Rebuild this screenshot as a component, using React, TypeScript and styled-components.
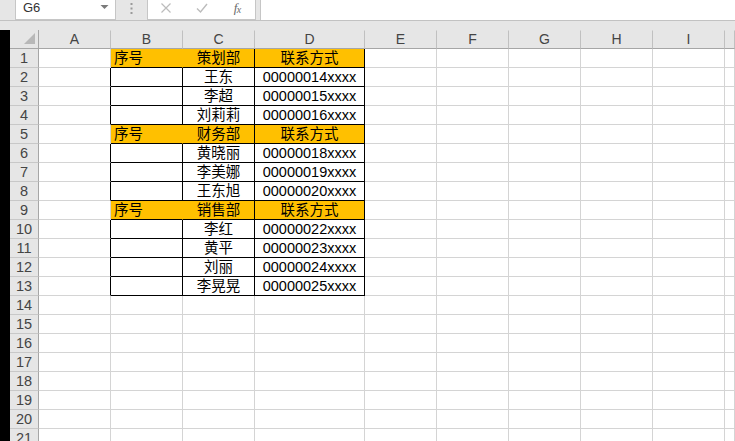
import React from "react";
import styled, { createGlobalStyle } from "styled-components";

const GlobalStyle = createGlobalStyle`
  html, body { margin: 0; padding: 0; background: #e6e6e6; }
  * { box-sizing: border-box; }
`;

const GRID = "#d4d4d4";
const BLACK = "#000000";
const HEAD_LINE = "#a6a6a6";
const ORANGE = "#ffc000";
const CELL_FONT = `"Liberation Sans", "Noto Sans CJK SC", sans-serif`;

const Page = styled.div`
  width: 735px;
  height: 441px;
  overflow: hidden;
  display: flex;
  flex-direction: column;
  background: #e6e6e6;
`;

const FormulaBar = styled.div`
  height: 21px;
  display: flex;
  padding-left: 15px;
  background: #e6e6e6;
  border-bottom: 1px solid #c2c2c2;
  flex-shrink: 0;
`;

const NameBox = styled.div`
  width: 101px;
  height: 20px;
  background: #ffffff;
  border: 1px solid #c6c6c6;
  border-top: none;
  display: flex;
  align-items: flex-start;
  justify-content: space-between;
  padding: 0 6px 0 7px;
  font-family: "Liberation Sans", sans-serif;
  font-size: 13px;
  line-height: 15px;
  color: #333333;
`;

const Grip = styled.div`
  width: 31px;
  display: flex;
  justify-content: center;
  padding-top: 3px;
`;

const FxBox = styled.div`
  width: 109px;
  height: 20px;
  background: #ffffff;
  border: 1px solid #c6c6c6;
  border-top: none;
  display: flex;
  align-items: flex-start;
  padding-top: 1px;
`;

const FxSlot = styled.div<{ $w: number }>`
  width: ${(p) => p.$w}px;
  display: flex;
  justify-content: center;
`;

const FxText = styled.span`
  font-family: "Liberation Serif", serif;
  font-style: italic;
  font-size: 13px;
  line-height: 13px;
  color: #6a6a6a;
  letter-spacing: -0.5px;
  & > sub {
    font-size: 10px;
    vertical-align: -1px;
  }
`;

const FormulaInput = styled.div`
  flex: 1;
  margin-left: 4px;
  height: 20px;
  background: #ffffff;
  border-left: 1px solid #c6c6c6;
`;

const Spacer = styled.div`
  height: 9px;
  flex-shrink: 0;
`;

const Workspace = styled.div`
  flex: 1;
  display: flex;
  min-height: 0;
`;

const LeftEdge = styled.div`
  width: 10px;
  background: #000000;
  flex-shrink: 0;
`;

const Sheet = styled.div`
  flex: 1;
  display: grid;
  grid-template-columns: 29px 72px 72px 72px 110px 72px 72px 72px 72px 72px 1fr;
  grid-auto-rows: 19px;
  background: #ffffff;
  overflow: hidden;
`;

const Corner = styled.div`
  background: #e6e6e6;
  border-right: 1px solid ${HEAD_LINE};
  border-bottom: 1px solid ${HEAD_LINE};
  display: flex;
  justify-content: flex-end;
  align-items: flex-end;
  padding: 0 3px 4px 0;
`;

const ColHeader = styled.div`
  background: #e6e6e6;
  border-right: 1px solid #c0c0c0;
  border-bottom: 1px solid ${HEAD_LINE};
  border-top: 1px solid #e6e6e6;
  font-family: "Liberation Sans", sans-serif;
  font-size: 14px;
  line-height: 17px;
  color: #444444;
  text-align: center;
`;

const RowHeader = styled.div`
  background: #e6e6e6;
  border-right: 1px solid ${HEAD_LINE};
  border-bottom: 1px solid #c8c8c8;
  font-family: "Liberation Sans", sans-serif;
  font-size: 14.5px;
  line-height: 19px;
  color: #444444;
  text-align: center;
`;

const Cell = styled.div<{
  $fill?: boolean;
  $align?: "left" | "center";
  $right?: string;
  $bottom?: string;
}>`
  background: ${(p) => (p.$fill ? ORANGE : "#ffffff")};
  border-right: 1px solid ${(p) => p.$right ?? GRID};
  border-bottom: 1px solid ${(p) => p.$bottom ?? GRID};
  font-family: ${CELL_FONT};
  font-size: 14.5px;
  line-height: 19px;
  color: #000000;
  text-align: ${(p) => p.$align ?? "left"};
  padding-left: ${(p) => (p.$align === "center" ? 0 : 3)}px;
  white-space: nowrap;
  overflow: hidden;
`;

type Row = { header?: boolean; b?: string; c?: string; d?: string };

const rows: Row[] = [
  { header: true, b: "序号", c: "策划部", d: "联系方式" },
  { c: "王东", d: "00000014xxxx" },
  { c: "李超", d: "00000015xxxx" },
  { c: "刘莉莉", d: "00000016xxxx" },
  { header: true, b: "序号", c: "财务部", d: "联系方式" },
  { c: "黄晓丽", d: "00000018xxxx" },
  { c: "李美娜", d: "00000019xxxx" },
  { c: "王东旭", d: "00000020xxxx" },
  { header: true, b: "序号", c: "销售部", d: "联系方式" },
  { c: "李红", d: "00000022xxxx" },
  { c: "黄平", d: "00000023xxxx" },
  { c: "刘丽", d: "00000024xxxx" },
  { c: "李晃晃", d: "00000025xxxx" },
];

const columns = ["A", "B", "C", "D", "E", "F", "G", "H", "I", ""];
const TOTAL_ROWS = 21;

function renderRow(i: number) {
  const r: Row | undefined = rows[i];
  const inTable = !!r;
  const header = !!r?.header;
  return (
    <React.Fragment key={i}>
      <RowHeader>{i + 1}</RowHeader>
      <Cell $right={inTable && !header ? BLACK : GRID} />
      <Cell
        $fill={header}
        $right={inTable ? (header ? ORANGE : BLACK) : GRID}
        $bottom={inTable ? BLACK : GRID}
      >
        {r?.b}
      </Cell>
      <Cell $fill={header} $align="center" $right={inTable ? BLACK : GRID} $bottom={inTable ? BLACK : GRID}>
        {r?.c}
      </Cell>
      <Cell $fill={header} $align="center" $right={inTable ? BLACK : GRID} $bottom={inTable ? BLACK : GRID}>
        {r?.d}
      </Cell>
      <Cell />
      <Cell />
      <Cell />
      <Cell />
      <Cell />
      <Cell />
    </React.Fragment>
  );
}

export default function App() {
  return (
    <Page>
      <GlobalStyle />
      <FormulaBar>
        <NameBox>
          <span>G6</span>
          <svg width="9" height="14" viewBox="0 0 9 14">
            <polygon points="0.5,5 8.5,5 4.5,9" fill="#7a7a7a" />
          </svg>
        </NameBox>
        <Grip>
          <svg width="3" height="12" viewBox="0 0 3 12">
            <rect x="0.5" y="0" width="2" height="2" fill="#9a9a9a" />
            <rect x="0.5" y="4.5" width="2" height="2" fill="#9a9a9a" />
            <rect x="0.5" y="9" width="2" height="2" fill="#9a9a9a" />
          </svg>
        </Grip>
        <FxBox>
          <FxSlot $w={36}>
            <svg width="14" height="14" viewBox="0 0 14 14">
              <path d="M2.5 2.5 L11.5 11.5 M11.5 2.5 L2.5 11.5" stroke="#bcbcbc" strokeWidth="1.2" fill="none" />
            </svg>
          </FxSlot>
          <FxSlot $w={36}>
            <svg width="14" height="14" viewBox="0 0 14 14">
              <path d="M2 7.5 L5.5 11 L12 3" stroke="#bcbcbc" strokeWidth="1.4" fill="none" />
            </svg>
          </FxSlot>
          <FxSlot $w={36}>
            <FxText>
              f<sub>x</sub>
            </FxText>
          </FxSlot>
        </FxBox>
        <FormulaInput />
      </FormulaBar>
      <Spacer />
      <Workspace>
        <LeftEdge />
        <Sheet>
          <Corner>
            <svg width="11" height="11" viewBox="0 0 11 11">
              <polygon points="11,0 11,11 0,11" fill="#b8b8b8" />
            </svg>
          </Corner>
          {columns.map((c, idx) => (
            <ColHeader key={idx}>{c}</ColHeader>
          ))}
          {Array.from({ length: TOTAL_ROWS }, (_, i) => renderRow(i))}
        </Sheet>
      </Workspace>
    </Page>
  );
}
